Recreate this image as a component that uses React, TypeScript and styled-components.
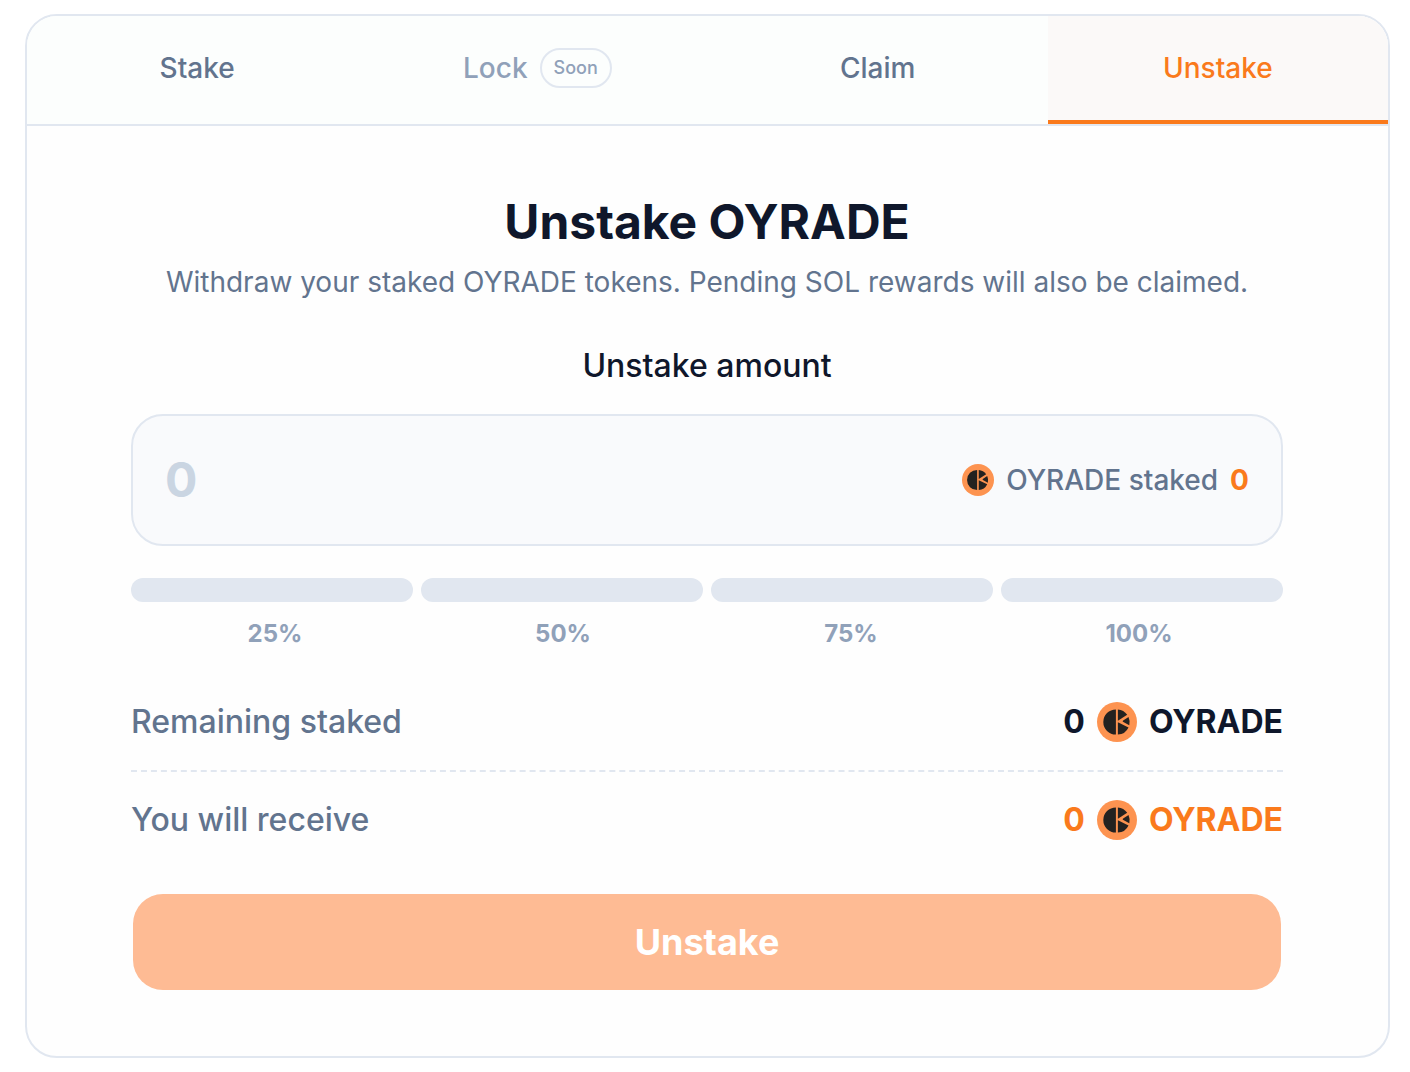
import React, { useState } from "react";
import styled, { createGlobalStyle } from "styled-components";

const color = {
  ink: "#0f172b",
  text: "#62748e",
  muted: "#90a1b9",
  faint: "#cad5e2",
  line: "#e1e7f0",
  accent: "#fa7a1c",
  accentSoft: "#febb94",
};

const GlobalStyle = createGlobalStyle`
  *, *::before, *::after { box-sizing: border-box; }
  body {
    margin: 0;
    background: #ffffff;
    font-family: Inter, "Liberation Sans", sans-serif;
    font-optical-sizing: none;
    -webkit-font-smoothing: antialiased;
  }
  button, input { font: inherit; }
`;

const Page = styled.main`
  padding: 14px 20px 14px 25px;
`;

const Card = styled.section`
  border: 2px solid ${color.line};
  border-radius: 32px;
  background: #fefefe;
  overflow: hidden;
`;

const Tabs = styled.div`
  display: grid;
  grid-template-columns: repeat(4, 1fr);
  border-bottom: 2px solid ${color.line};
  background: #fcfefd;
`;

const Tab = styled.button<{ $active?: boolean }>`
  display: flex;
  align-items: center;
  justify-content: center;
  gap: 12px;
  height: 108px;
  padding: 0 16px;
  border: 0;
  border-bottom: 4px solid ${(p) => (p.$active ? color.accent : "transparent")};
  background: ${(p) => (p.$active ? "#fbf9f8" : "transparent")};
  color: ${(p) => (p.$active ? color.accent : color.text)};
  font-size: 28px;
  font-weight: 500;
  line-height: 40px;
  cursor: pointer;

  &:disabled {
    color: ${color.muted};
    cursor: default;
  }
`;

const Badge = styled.span`
  padding: 0 12px;
  border: 2px solid ${color.line};
  border-radius: 20px;
  font-size: 18px;
  line-height: 36px;
`;

const Form = styled.form`
  display: flex;
  flex-direction: column;
  padding: 64px 105px 64px 104px;
`;

const Heading = styled.header`
  display: flex;
  flex-direction: column;
  gap: 8px;
  margin-bottom: 40px;
  text-align: center;
`;

const Title = styled.h1`
  margin: 0;
  color: ${color.ink};
  font-size: 48px;
  font-weight: 700;
  line-height: 64px;
`;

const Subtitle = styled.p`
  margin: 0;
  color: ${color.text};
  font-size: 28px;
  line-height: 40px;
`;

const AmountLabel = styled.label`
  margin-bottom: 24px;
  color: ${color.ink};
  font-size: 32px;
  font-weight: 500;
  line-height: 48px;
  text-align: center;
`;

const AmountBox = styled.div`
  display: flex;
  align-items: center;
  gap: 16px;
  height: 132px;
  padding: 0 32px;
  border: 2px solid ${color.line};
  border-radius: 32px;
  background: #f9fafc;
`;

const AmountInput = styled.input`
  flex: 1;
  min-width: 0;
  padding: 0;
  border: 0;
  outline: 0;
  background: transparent;
  color: ${color.ink};
  font-size: 48px;
  font-weight: 700;
  line-height: 64px;

  &::placeholder {
    color: ${color.faint};
    opacity: 1;
  }
`;

const Balance = styled.div`
  display: flex;
  align-items: center;
  gap: 12px;
  color: ${color.text};
  font-size: 28px;
  font-weight: 500;
  line-height: 40px;
`;

const BalanceValue = styled.strong`
  color: ${color.accent};
  font-weight: 700;
`;

const Bars = styled.div`
  display: grid;
  grid-template-columns: repeat(4, 1fr);
  gap: 8px;
  margin-top: 32px;
`;

const Bar = styled.span<{ $filled: boolean }>`
  height: 24px;
  border-radius: 12px;
  background: ${(p) => (p.$filled ? color.accent : color.line)};
`;

const Shares = styled.div`
  display: grid;
  grid-template-columns: repeat(4, 1fr);
  margin: 16px 0 24px;
`;

const Share = styled.button`
  padding: 0;
  border: 0;
  background: transparent;
  color: ${color.muted};
  font-size: 24px;
  font-weight: 700;
  line-height: 32px;
  cursor: pointer;
`;

const Summary = styled.dl`
  margin: 0 0 24px;
`;

const SummaryRow = styled.div`
  display: flex;
  align-items: center;
  justify-content: space-between;
  padding: 24px 0;
  font-size: 32px;
  line-height: 48px;

  & + & {
    border-top: 2px dashed ${color.line};
  }
`;

const Term = styled.dt`
  color: ${color.text};
  font-weight: 500;
`;

const Value = styled.dd<{ $accent?: boolean }>`
  display: flex;
  align-items: center;
  gap: 12px;
  margin: 0;
  color: ${(p) => (p.$accent ? color.accent : color.ink)};
  font-weight: 700;
`;

const Submit = styled.button`
  height: 100px;
  padding: 0;
  border: 2px solid transparent;
  border-radius: 32px;
  background: ${color.accentSoft};
  background-clip: padding-box;
  color: #ffffff;
  font-size: 36px;
  font-weight: 700;
  line-height: 56px;
`;

function Coin({ size }: { size: number }) {
  return (
    <svg width={size} height={size} viewBox="0 0 40 40" aria-hidden="true">
      <circle cx="20" cy="20" r="20" fill="#fd9350" />
      <g fill="#242220">
        <path d="M18.9 7.4A12.6 12.6 0 0 0 18.9 32.6Z" />
        <path d="M20.9 7.4A12.6 12.6 0 0 1 30.2 12.7L20.9 18.8Z" />
        <path d="M25 19.3L31.5 15.1A12.6 12.6 0 0 1 32.3 23.3Z" />
        <path d="M20.9 20.3L31.5 25.4A12.6 12.6 0 0 1 20.9 32.6Z" />
      </g>
      <path d="M21 19.6L25.6 17.4V21.4Z" fill="#fd9350" />
    </svg>
  );
}

const tabs = [
  { name: "Stake" },
  { name: "Lock", soon: true },
  { name: "Claim" },
  { name: "Unstake" },
];

const shares = [25, 50, 75, 100];

export default function App() {
  const [active, setActive] = useState("Unstake");
  const [amount, setAmount] = useState("");
  const [share, setShare] = useState(0);

  return (
    <>
      <GlobalStyle />
      <Page>
        <Card>
          <Tabs role="tablist">
            {tabs.map((tab) => (
              <Tab
                key={tab.name}
                type="button"
                role="tab"
                aria-selected={active === tab.name}
                $active={active === tab.name}
                disabled={tab.soon}
                onClick={() => setActive(tab.name)}
              >
                {tab.name}
                {tab.soon && <Badge>Soon</Badge>}
              </Tab>
            ))}
          </Tabs>
          <Form onSubmit={(e) => e.preventDefault()}>
            <Heading>
              <Title>Unstake OYRADE</Title>
              <Subtitle>
                Withdraw your staked OYRADE tokens. Pending SOL rewards will also be claimed.
              </Subtitle>
            </Heading>
            <AmountLabel htmlFor="amount">Unstake amount</AmountLabel>
            <AmountBox>
              <AmountInput
                id="amount"
                inputMode="decimal"
                placeholder="0"
                value={amount}
                onChange={(e) => setAmount(e.target.value)}
              />
              <Balance>
                <Coin size={32} />
                <span>OYRADE staked</span>
                <BalanceValue>0</BalanceValue>
              </Balance>
            </AmountBox>
            <Bars>
              {shares.map((value) => (
                <Bar key={value} $filled={share >= value} />
              ))}
            </Bars>
            <Shares>
              {shares.map((value) => (
                <Share key={value} type="button" onClick={() => setShare(value)}>
                  {`${value}%`}
                </Share>
              ))}
            </Shares>
            <Summary>
              <SummaryRow>
                <Term>Remaining staked</Term>
                <Value>
                  <span>0</span>
                  <Coin size={40} />
                  <span>OYRADE</span>
                </Value>
              </SummaryRow>
              <SummaryRow>
                <Term>You will receive</Term>
                <Value $accent>
                  <span>0</span>
                  <Coin size={40} />
                  <span>OYRADE</span>
                </Value>
              </SummaryRow>
            </Summary>
            <Submit type="submit" disabled={!amount}>
              Unstake
            </Submit>
          </Form>
        </Card>
      </Page>
    </>
  );
}
